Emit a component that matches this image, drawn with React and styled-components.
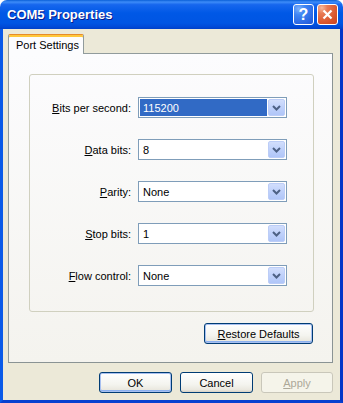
import { Fragment } from "react"
import styled, { createGlobalStyle } from "styled-components"

const GlobalStyle = createGlobalStyle`
  html, body {
    margin: 0;
    padding: 0;
    background: #ffffff;
  }
  body {
    font-family: "Liberation Sans", Arial, sans-serif;
    font-size: 11px;
    color: #000000;
  }
  * {
    box-sizing: border-box;
  }
`

const Window = styled.div`
  width: 343px;
  height: 403px;
  display: flex;
  flex-direction: column;
  overflow: hidden;
`

const TitleBar = styled.div`
  height: 29px;
  flex-shrink: 0;
  display: flex;
  align-items: center;
  padding: 0 5px 0 7px;
  border-radius: 7px 7px 0 0;
  background: linear-gradient(
    180deg,
    #0a5fd8 0%,
    #3d8cf8 7%,
    #1767ee 16%,
    #0058e6 45%,
    #0055e3 80%,
    #004ad8 92%,
    #0040c8 100%
  );
`

const Title = styled.div`
  flex: 1;
  color: #ffffff;
  font-weight: bold;
  font-size: 13px;
  text-shadow: 1px 1px 0 #0a1a8a;
`

const Caption = styled.div`
  width: 21px;
  height: 21px;
  margin-left: ${(props) => props.gap || "0"};
  border: 1px solid #ffffff;
  border-radius: 3px;
  display: flex;
  align-items: center;
  justify-content: center;
  color: #ffffff;
  font-weight: bold;
  font-size: 16px;
  background: ${(props) =>
    props.close
      ? "radial-gradient(circle at 20% 15%, #f7b99a 0%, #e87a55 25%, #d9542b 70%, #c84420 100%)"
      : "radial-gradient(circle at 25% 20%, #7fb0fb 0%, #3f86f3 30%, #2a66e2 75%, #1d56d6 100%)"};
`

const Frame = styled.div`
  flex: 1;
  display: flex;
  flex-direction: column;
  background: #ece9d8;
  border-left: 3px solid #0a5ae8;
  border-right: 3px solid #0336c8;
  border-bottom: 3px solid #0741d0;
  padding: 5px 7px 0 5px;
`

const TabStrip = styled.div`
  display: flex;
  position: relative;
  z-index: 1;
  margin-bottom: -1px;
`

const Tab = styled.div`
  width: 76px;
  height: 20px;
  padding: 3px 0 0 7px;
  background: #fcfcfe;
  border: 1px solid #919b9c;
  border-top: 1px solid #e68b2c;
  border-bottom: none;
  border-radius: 2px 2px 0 0;
  box-shadow: inset 0 2px 0 #ffc83c;
  font-size: 11px;
  line-height: 14px;
`

const Panel = styled.div`
  height: 310px;
  display: flex;
  flex-direction: column;
  border: 1px solid #919b9c;
  border-right-color: #8a9394;
  border-bottom-color: #8a9394;
  background: linear-gradient(180deg, #fcfcfe 0%, #f4f3ee 100%);
  padding: 20px 18px 18px 20px;
`

const GroupBox = styled.div`
  width: 285px;
  height: 238px;
  border: 1px solid #d0d0bf;
  border-radius: 3px;
  display: grid;
  grid-template-columns: 101px 149px;
  grid-auto-rows: 21px;
  column-gap: 7px;
  row-gap: 21px;
  padding-top: 22px;
  align-content: start;
`

const Label = styled.label`
  display: flex;
  align-items: center;
  justify-content: flex-end;
  white-space: nowrap;
  u {
    text-decoration: underline;
  }
`

const Select = styled.div`
  height: 21px;
  display: flex;
  align-items: stretch;
  border: 1px solid #7f9db9;
  background: #ffffff;
  padding: 1px;
`

const Value = styled.div`
  flex: 1;
  display: flex;
  align-items: center;
  padding-left: 3px;
  margin-right: 1px;
  background: ${(props) => (props.selected ? "#316ac5" : "transparent")};
  color: ${(props) => (props.selected ? "#ffffff" : "#000000")};
`

const DropButton = styled.div`
  width: 17px;
  display: flex;
  align-items: center;
  justify-content: center;
  border: 1px solid #bccdf7;
  border-radius: 2px;
  background: linear-gradient(180deg, #d2defc 0%, #bfd1fb 50%, #b0c6f8 100%);
`

const ButtonRow = styled.div`
  display: flex;
  justify-content: flex-end;
  gap: ${(props) => props.gap || "0"};
  margin-top: ${(props) => props.top || "0"};
  padding-right: ${(props) => props.right || "0"};
`

const Button = styled.button`
  width: ${(props) => props.w || "73px"};
  height: 21px;
  padding: 0;
  font-family: "Liberation Sans", Arial, sans-serif;
  font-size: 11px;
  color: ${(props) => (props.disabled ? "#aca899" : "#000000")};
  border: 1px solid ${(props) => (props.disabled ? "#c9c7ba" : "#003c74")};
  border-radius: 3px;
  background: ${(props) =>
    props.disabled
      ? "#f5f4ea"
      : "linear-gradient(180deg, #ffffff 0%, #f4f4ef 60%, #eae8df 88%, #d6d0c5 100%)"};
  box-shadow: ${(props) =>
    props.focused ? "inset 0 0 0 1px #a8c0f0, inset 0 -1px 0 1px #8bb0ef" : "none"};
  u {
    text-decoration: underline;
  }
`

const Chevron = () => (
  <svg width="9" height="6" viewBox="0 0 9 6">
    <path d="M1 1 L4.5 4.5 L8 1" fill="none" stroke="#4d6185" strokeWidth="2" />
  </svg>
)

const fields = [
  { key: "B", rest: "its per second:", value: "115200", selected: true },
  { key: "D", rest: "ata bits:", value: "8" },
  { key: "P", rest: "arity:", value: "None" },
  { key: "S", rest: "top bits:", value: "1" },
  { key: "F", rest: "low control:", value: "None" },
]

function App() {
  return (
    <>
      <GlobalStyle />
      <Window>
        <TitleBar>
          <Title>COM5 Properties</Title>
          <Caption>?</Caption>
          <Caption close gap="3px">
            <svg width="11" height="11" viewBox="0 0 11 11">
              <path d="M1.5 1.5 L9.5 9.5 M9.5 1.5 L1.5 9.5" stroke="#ffffff" strokeWidth="2.2" />
            </svg>
          </Caption>
        </TitleBar>
        <Frame>
          <TabStrip>
            <Tab>Port Settings</Tab>
          </TabStrip>
          <Panel>
            <GroupBox>
              {fields.map((f) => (
                <Fragment key={f.key}>
                  <Label>
                    <u>{f.key}</u>
                    {f.rest}
                  </Label>
                  <Select>
                    <Value selected={f.selected}>{f.value}</Value>
                    <DropButton>
                      <Chevron />
                    </DropButton>
                  </Select>
                </Fragment>
              ))}
            </GroupBox>
            <ButtonRow top="11px" right="1px">
              <Button w="109px" focused>
                <u>R</u>estore Defaults
              </Button>
            </ButtonRow>
          </Panel>
          <ButtonRow top="9px" gap="8px">
            <Button focused>OK</Button>
            <Button>Cancel</Button>
            <Button w="72px" disabled>
              <u>A</u>pply
            </Button>
          </ButtonRow>
        </Frame>
      </Window>
    </>
  )
}

export default App
